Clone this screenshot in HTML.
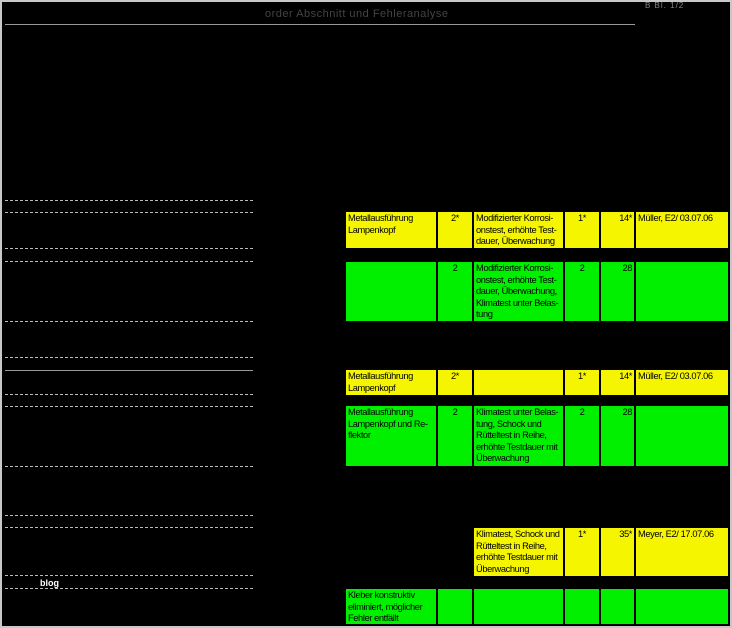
<!DOCTYPE html>
<html><head><meta charset="utf-8"><style>
body{margin:0;width:732px;height:628px;background:#000;position:relative;overflow:hidden;font-family:"Liberation Sans",Arial,sans-serif;}
.frame{position:absolute;left:0;top:0;width:728px;height:624px;border:2px solid #c8c8c8;}
.c{position:absolute;font-size:9.3px;line-height:11.6px;color:#000;letter-spacing:-0.4px;padding:1px 2px;box-sizing:border-box;overflow:hidden;}
.y{background:#f5f500}.g{background:#00f000}
.r{text-align:right}.m{text-align:center}
.l{position:absolute;height:0;border-top:1px dashed #bbb;}
</style></head><body>
<div class="frame"></div>
<div style="position:absolute;left:265px;top:8px;font-size:11px;color:#444;letter-spacing:0.5px">order Abschnitt und Fehleranalyse</div>
<div style="position:absolute;left:645px;top:1px;font-size:8px;color:#888;letter-spacing:1px">B Bl. 1/2</div>
<div style="position:absolute;left:40px;top:578px;font-size:9px;color:#fff;font-weight:bold">blog</div>

<div class="l" style="left:5px;top:24px;width:630px;border-top-style:solid;border-color:#999"></div>
<div class="l" style="left:5px;top:200px;width:248px"></div>
<div class="l" style="left:5px;top:212px;width:248px"></div>
<div class="l" style="left:5px;top:248px;width:248px"></div>
<div class="l" style="left:5px;top:261px;width:248px"></div>
<div class="l" style="left:5px;top:321px;width:248px"></div>
<div class="l" style="left:5px;top:357px;width:248px"></div>
<div class="l" style="left:5px;top:370px;width:248px;border-top-style:solid;border-color:#999"></div>
<div class="l" style="left:5px;top:394px;width:248px"></div>
<div class="l" style="left:5px;top:406px;width:248px"></div>
<div class="l" style="left:5px;top:466px;width:248px"></div>
<div class="l" style="left:5px;top:515px;width:248px"></div>
<div class="l" style="left:5px;top:527px;width:248px"></div>
<div class="l" style="left:5px;top:575px;width:248px"></div>
<div class="l" style="left:5px;top:588px;width:248px"></div>

<div class="c y" style="left:346px;top:212px;width:90px;height:36px">Metallausführung<br>Lampenkopf</div>
<div class="c y m" style="left:438px;top:212px;width:34px;height:36px">2*</div>
<div class="c y" style="left:474px;top:212px;width:89px;height:36px">Modifizierter Korrosi-<br>onstest, erhöhte Test-<br>dauer, Überwachung</div>
<div class="c y m" style="left:565px;top:212px;width:34px;height:36px">1*</div>
<div class="c y r" style="left:601px;top:212px;width:33px;height:36px">14*</div>
<div class="c y" style="left:636px;top:212px;width:92px;height:36px">Müller, E2/ 03.07.06</div>

<div class="c g" style="left:346px;top:262px;width:90px;height:59px"></div>
<div class="c g m" style="left:438px;top:262px;width:34px;height:59px">2</div>
<div class="c g" style="left:474px;top:262px;width:89px;height:59px">Modifizierter Korrosi-<br>onstest, erhöhte Test-<br>dauer, Überwachung,<br>Klimatest unter Belas-<br>tung</div>
<div class="c g m" style="left:565px;top:262px;width:34px;height:59px">2</div>
<div class="c g r" style="left:601px;top:262px;width:33px;height:59px">28</div>
<div class="c g" style="left:636px;top:262px;width:92px;height:59px"></div>

<div class="c y" style="left:346px;top:370px;width:90px;height:25px">Metallausführung<br>Lampenkopf</div>
<div class="c y m" style="left:438px;top:370px;width:34px;height:25px">2*</div>
<div class="c y" style="left:474px;top:370px;width:89px;height:25px"></div>
<div class="c y m" style="left:565px;top:370px;width:34px;height:25px">1*</div>
<div class="c y r" style="left:601px;top:370px;width:33px;height:25px">14*</div>
<div class="c y" style="left:636px;top:370px;width:92px;height:25px">Müller, E2/ 03.07.06</div>

<div class="c g" style="left:346px;top:406px;width:90px;height:60px">Metallausführung<br>Lampenkopf und Re-<br>flektor</div>
<div class="c g m" style="left:438px;top:406px;width:34px;height:60px">2</div>
<div class="c g" style="left:474px;top:406px;width:89px;height:60px">Klimatest unter Belas-<br>tung, Schock und<br>Rütteltest in Reihe,<br>erhöhte Testdauer mit<br>Überwachung</div>
<div class="c g m" style="left:565px;top:406px;width:34px;height:60px">2</div>
<div class="c g r" style="left:601px;top:406px;width:33px;height:60px">28</div>
<div class="c g" style="left:636px;top:406px;width:92px;height:60px"></div>

<div class="c y" style="left:474px;top:528px;width:89px;height:48px">Klimatest, Schock und<br>Rütteltest in Reihe,<br>erhöhte Testdauer mit<br>Überwachung</div>
<div class="c y m" style="left:565px;top:528px;width:34px;height:48px">1*</div>
<div class="c y r" style="left:601px;top:528px;width:33px;height:48px">35*</div>
<div class="c y" style="left:636px;top:528px;width:92px;height:48px">Meyer, E2/ 17.07.06</div>

<div class="c g" style="left:346px;top:589px;width:90px;height:35px">Kleber konstruktiv<br>eliminiert, möglicher<br>Fehler entfällt</div>
<div class="c g" style="left:438px;top:589px;width:34px;height:35px"></div>
<div class="c g" style="left:474px;top:589px;width:89px;height:35px"></div>
<div class="c g" style="left:565px;top:589px;width:34px;height:35px"></div>
<div class="c g" style="left:601px;top:589px;width:33px;height:35px"></div>
<div class="c g" style="left:636px;top:589px;width:92px;height:35px"></div>
</body></html>
